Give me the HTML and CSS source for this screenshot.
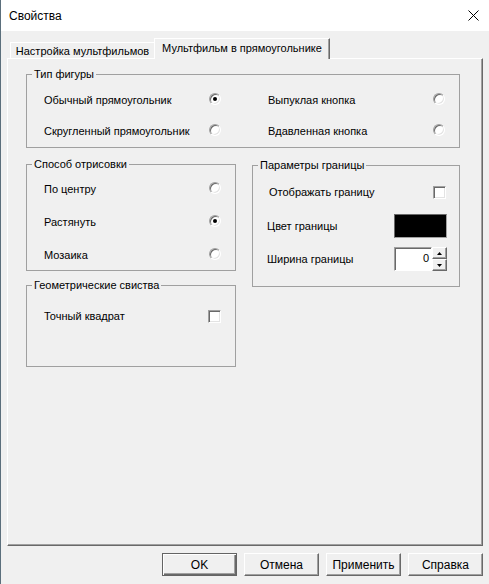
FILE: index.html
```html
<!DOCTYPE html>
<html lang="ru">
<head>
    <meta charset="UTF-8">
    <title>Свойства</title>
    <link rel="stylesheet" href="styles.css">
</head>
<body>
    <div class="window">
        <div class="titlebar">
            <span class="title">Свойства</span>
            <span class="close">
                <svg width="11" height="11" viewBox="0 0 11 11">
                    <path d="M0.5 0.5 L10.5 10.5 M10.5 0.5 L0.5 10.5" stroke="#000" stroke-width="1" fill="none"/>
                </svg>
            </span>
        </div>

        <div class="client">
            <div class="tabs">
                <div class="tab">Настройка мультфильмов</div>
                <div class="tab active">Мультфильм в прямоугольнике</div>
            </div>

            <div class="panel">
                <fieldset class="group group-shape">
                    <legend>Тип фигуры</legend>
                    <div class="shape-grid">
                        <div class="opt"><span>Обычный прямоугольник</span><span class="radio checked"></span></div>
                        <div class="opt"><span>Выпуклая кнопка</span><span class="radio"></span></div>
                        <div class="opt"><span>Скругленный прямоугольник</span><span class="radio"></span></div>
                        <div class="opt"><span>Вдавленная кнопка</span><span class="radio"></span></div>
                    </div>
                </fieldset>

                <div class="columns">
                    <div class="col-left">
                        <fieldset class="group group-draw">
                            <legend>Способ отрисовки</legend>
                            <div class="rows">
                                <div class="opt"><span>По центру</span><span class="radio"></span></div>
                                <div class="opt"><span>Растянуть</span><span class="radio checked"></span></div>
                                <div class="opt"><span>Мозаика</span><span class="radio"></span></div>
                            </div>
                        </fieldset>

                        <fieldset class="group group-geom">
                            <legend>Геометрические свиства</legend>
                            <div class="rows">
                                <div class="opt"><span>Точный квадрат</span><span class="check"></span></div>
                            </div>
                        </fieldset>
                    </div>

                    <fieldset class="group group-border">
                        <legend>Параметры границы</legend>
                        <div class="params">
                            <div class="param param-show"><span>Отображать границу</span><span class="check"></span></div>
                            <div class="param param-color"><span>Цвет границы</span><span class="swatch"></span></div>
                            <div class="param param-width">
                                <span>Ширина границы</span>
                                <span class="spin">
                                    <span class="spin-edit">0</span>
                                    <span class="spin-btns">
                                        <span class="spin-btn"><svg width="5" height="3" viewBox="0 0 5 3"><path d="M2.5 0 L5 3 L0 3 Z" fill="#000"/></svg></span>
                                        <span class="spin-btn"><svg width="5" height="3" viewBox="0 0 5 3"><path d="M0 0 L5 0 L2.5 3 Z" fill="#000"/></svg></span>
                                    </span>
                                </span>
                            </div>
                        </div>
                    </fieldset>
                </div>
            </div>

            <div class="actions">
                <button class="btn default">OK</button>
                <button class="btn">Отмена</button>
                <button class="btn">Применить</button>
                <button class="btn">Справка</button>
            </div>
        </div>
    </div>
</body>
</html>
```

FILE: styles.css
```css
body {
    margin: 0;
    font-family: "Liberation Sans", Arial, sans-serif;
    color: #000;
    background: #f0f0f0;
}

.window {
    width: 489px;
    height: 584px;
    box-sizing: border-box;
    border-left: 1px solid #5b6f7c;
    display: flex;
    flex-direction: column;
    background: #f0f0f0;
}

.titlebar {
    height: 31px;
    flex-shrink: 0;
    background: #fff;
    display: flex;
    align-items: center;
    justify-content: space-between;
    padding: 0 10px 0 8px;
    font-size: 12px;
}

.close {
    display: flex;
}

.client {
    flex: 1;
    display: flex;
    flex-direction: column;
    padding: 7px 6px 8px 6px;
    min-height: 0;
}

/* tabs */
.tabs {
    display: flex;
    align-items: flex-end;
    height: 20px;
    padding-left: 3px;
    font-size: 11px;
}

.tab {
    box-sizing: border-box;
    height: 16px;
    width: 144px;
    border-top: 1px solid #fff;
    border-left: 1px solid #fff;
    display: flex;
    align-items: center;
    justify-content: center;
    white-space: nowrap;
}

.tab.active {
    position: relative;
    z-index: 1;
    height: 21px;
    width: 176px;
    margin-bottom: -1px;
    background: #f0f0f0;
    border-right: 1px solid #696969;
    box-shadow: inset -1px 0 #a0a0a0;
    padding-bottom: 2px;
}

.panel {
    flex: 1;
    box-sizing: border-box;
    border-top: 1px solid #fff;
    border-left: 1px solid #fff;
    border-right: 1px solid #696969;
    border-bottom: 1px solid #696969;
    box-shadow: inset -1px -1px #a0a0a0;
    padding: 9px 22px 0 18px;
}

/* group boxes */
.group {
    margin: 0;
    padding: 0;
    min-width: 0;
    border: 1px solid #a0a0a0;
    font-size: 11px;
}

.group legend {
    margin-left: 5px;
    padding: 0 2px;
    line-height: 13px;
}

.shape-grid {
    display: grid;
    grid-template-columns: 1fr 1fr;
    column-gap: 47px;
    row-gap: 11px;
    padding: 9px 14px 6px 17px;
}

.opt {
    height: 20px;
    display: flex;
    align-items: center;
    justify-content: space-between;
    white-space: nowrap;
}

.columns {
    display: grid;
    grid-template-columns: 210px 208px;
    column-gap: 16px;
    align-items: start;
    margin-top: 10px;
}

.col-left {
    display: flex;
    flex-direction: column;
    gap: 8px;
}

.group-draw .rows {
    display: flex;
    flex-direction: column;
    gap: 13px;
    padding: 8px 14px 5px 17px;
}

.group-geom .rows {
    padding: 14px 14px 40px 17px;
}

.group-border {
    margin-top: 1px;
}

.params {
    padding: 10px 12px 15px 14px;
}

.param {
    display: flex;
    align-items: center;
    justify-content: space-between;
    white-space: nowrap;
}

.param-show {
    height: 20px;
    padding-left: 2px;
}

.param-show .check {
    margin-right: 1px;
}

.param-color {
    margin-top: 12px;
}

.param-width {
    margin-top: 9px;
}

/* controls */
.radio {
    box-sizing: border-box;
    width: 12px;
    height: 12px;
    border-radius: 50%;
    border: 1px solid;
    border-color: #a0a0a0 #fff #fff #a0a0a0;
    box-shadow: inset 1px 1px #696969, inset -1px -1px #e3e3e3;
    background: #fff;
    display: flex;
    align-items: center;
    justify-content: center;
    margin-bottom: 3px;
}

.radio.checked::after {
    content: "";
    width: 4px;
    height: 4px;
    border-radius: 50%;
    background: #000;
}

.check {
    box-sizing: border-box;
    width: 13px;
    height: 13px;
    border: 1px solid;
    border-color: #a0a0a0 #fff #fff #a0a0a0;
    box-shadow: inset 1px 1px #696969, inset -1px -1px #e3e3e3;
    background: #fff;
}

.swatch {
    box-sizing: border-box;
    width: 53px;
    height: 24px;
    background: #000;
    border: 1px solid;
    border-color: #696969 #a0a0a0 #a0a0a0 #696969;
}

.spin {
    display: flex;
    height: 24px;
}

.spin-edit {
    box-sizing: border-box;
    width: 38px;
    height: 24px;
    background: #fff;
    border: 1px solid;
    border-color: #a0a0a0 #fff #fff #a0a0a0;
    box-shadow: inset 1px 1px #696969;
    text-align: right;
    padding-right: 2px;
    line-height: 21px;
}

.spin-btns {
    display: flex;
    flex-direction: column;
    width: 15px;
}

.spin-btn {
    flex: 1;
    box-sizing: border-box;
    border: 1px solid;
    border-color: #fff #696969 #696969 #fff;
    box-shadow: inset -1px -1px #a0a0a0;
    background: #f0f0f0;
    display: flex;
    align-items: center;
    justify-content: center;
}

/* dialog buttons */
.actions {
    display: flex;
    justify-content: flex-end;
    gap: 7px;
    margin-top: 7px;
    height: 23px;
}

.btn {
    box-sizing: border-box;
    width: 75px;
    height: 23px;
    font-family: "Liberation Sans", Arial, sans-serif;
    font-size: 12px;
    color: #000;
    background: #f0f0f0;
    border: 1px solid;
    border-color: #fff #696969 #696969 #fff;
    box-shadow: inset -1px -1px #a0a0a0;
    padding: 0;
}

.btn.default {
    border-color: #646464;
    box-shadow: inset 1px 1px #fff, inset -1px -1px #696969, inset -2px -2px #a0a0a0;
}
```
